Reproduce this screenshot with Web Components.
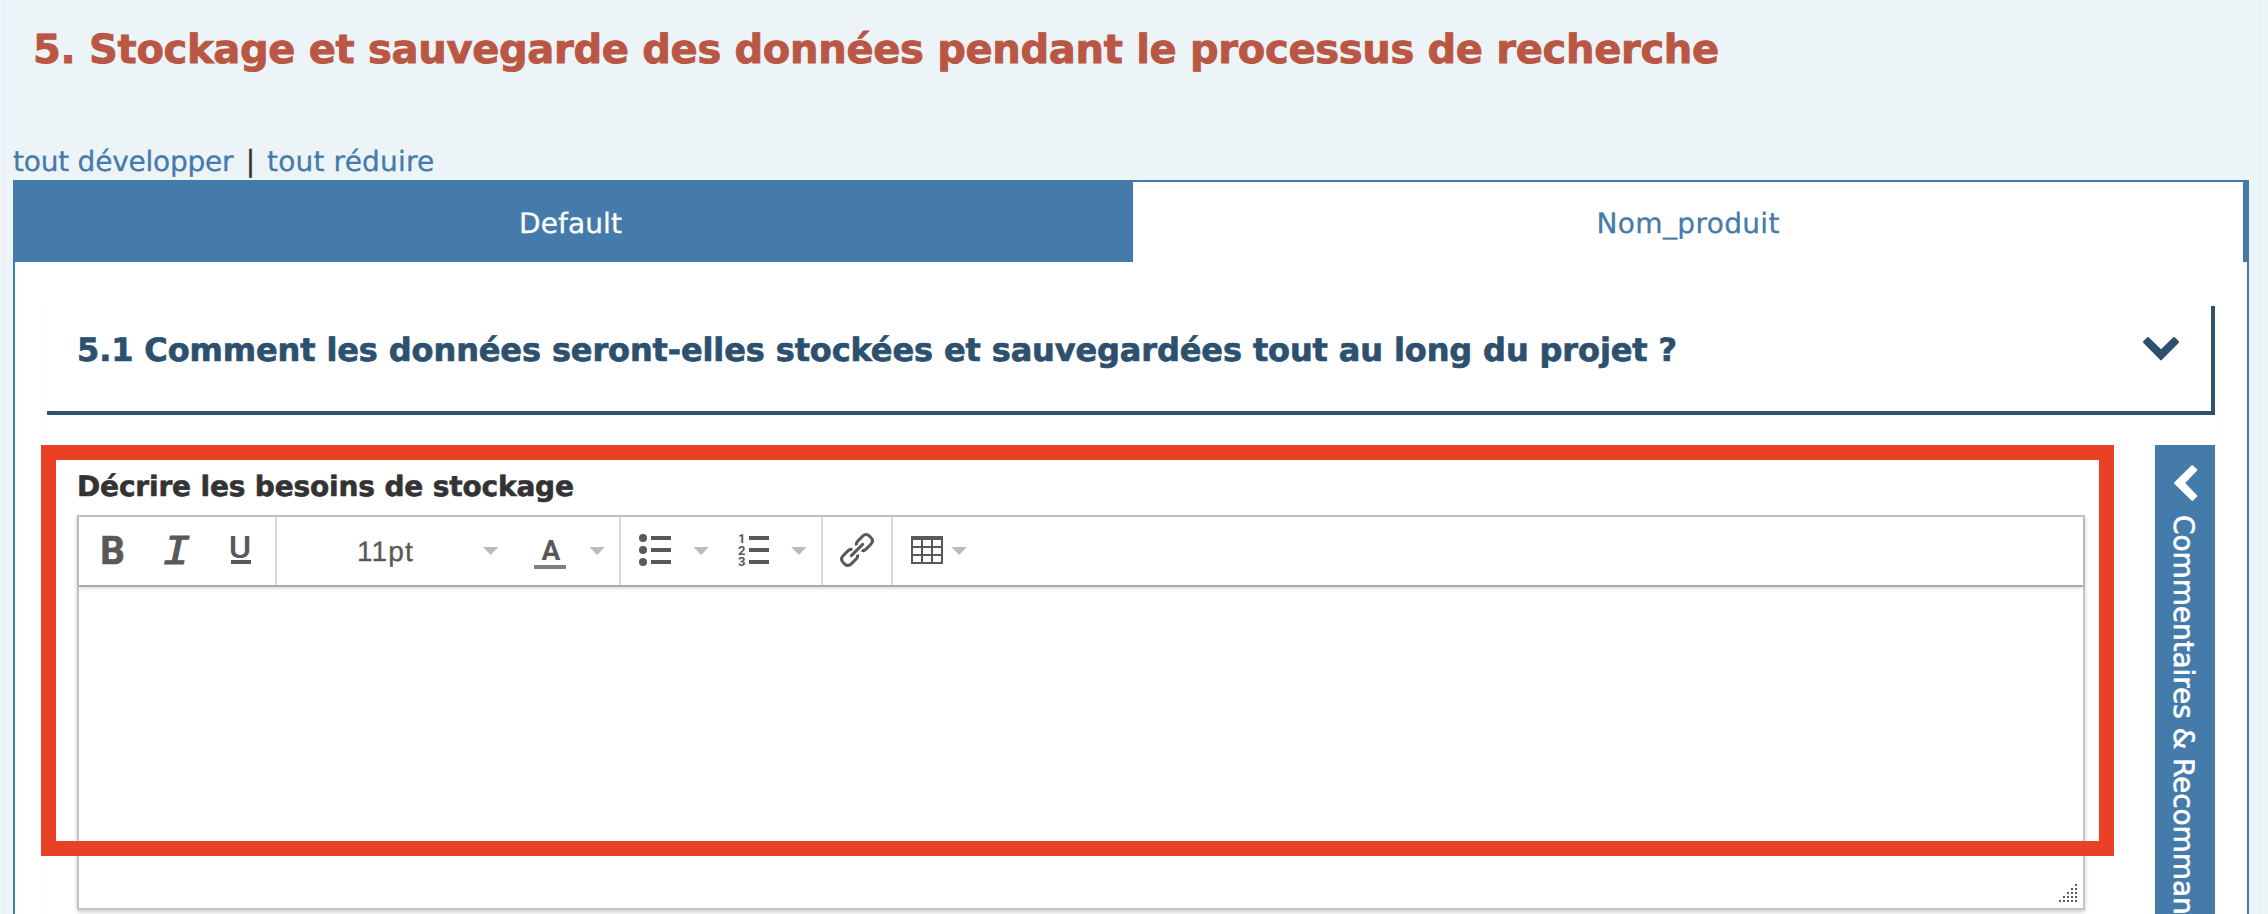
<!DOCTYPE html>
<html lang="fr">
<head>
<meta charset="utf-8">
<title>Plan de gestion de données</title>
<style>
  html, body { margin: 0; height: 914px; overflow: hidden; }
  body { background: #edf4f8; color: #333; font-family: "DejaVu Sans", Verdana, sans-serif; font-size: 28px; }
</style>
</head>
<body>
<plan-page></plan-page>
<script>
/* Text whose drawn extent is fixed by its "extent" attribute, through letter spacing. */
class FitText extends HTMLElement {
  connectedCallback() {
    const root = this.attachShadow({ mode: 'open' });
    root.innerHTML = `<style>
      :host { display: block; white-space: pre; text-rendering: geometricPrecision; flex: none; -webkit-text-stroke: .3px currentColor; }
      span { display: inline-block; }
    </style><span><slot></slot></span>`;
    const cs = getComputedStyle(this);
    const text = this.textContent;
    const ctx = document.createElement('canvas').getContext('2d');
    ctx.font = `${cs.fontWeight} ${cs.fontSize} ${cs.fontFamily}`;
    ctx.textRendering = 'geometricPrecision';
    const m = ctx.measureText(text);
    const extent = parseFloat(this.getAttribute('extent'));
    const gap = (extent - m.actualBoundingBoxLeft - m.actualBoundingBoxRight) / (text.length - 1);
    const span = root.querySelector('span');
    span.style.letterSpacing = gap + 'px';
    span.style.marginInlineStart = m.actualBoundingBoxLeft + 'px';
    this.style.inlineSize = extent + 'px';
  }
}

class SectionHeader extends HTMLElement {
  constructor() {
    super();
    this.attachShadow({ mode: 'open' }).innerHTML = `<style>
      :host { display: block; height: 180px; box-sizing: border-box; }
      h1 { margin: 0; padding-left: 36px; height: 143px; font: bold 40px/101px "DejaVu Sans", Verdana, sans-serif; color: #b95744; box-sizing: border-box; }
      fit-text { -webkit-text-stroke: .3px currentColor; }
      h1 fit-text { -webkit-text-stroke: .9px currentColor; }
      nav { display: flex; line-height: 37px; padding-left: 13px; color: #457baa; }
      .bar { color: #333; width: 33px; text-align: center; -webkit-text-stroke: .4px #333; }
    </style>
    <h1><fit-text extent="1682">5. Stockage et sauvegarde des données pendant le processus de recherche</fit-text></h1>
    <nav><fit-text extent="221">tout développer</fit-text><span class="bar">|</span><fit-text extent="166">tout réduire</fit-text></nav>`;
  }
}

class ProductTabs extends HTMLElement {
  constructor() {
    super();
    this.attachShadow({ mode: 'open' }).innerHTML = `<style>
      :host { display: flex; height: 82px; box-sizing: border-box; border-top: 2px solid #457baa; border-right: 6px solid #457baa; line-height: 83px; background: #fff; }
      div { display: flex; justify-content: center; }
      .on { width: 1120px; background: #457baa; color: #fff; padding-right: 3px; box-sizing: border-box; }
      .off { flex: 1; color: #457baa; padding-left: 2px; }
    </style>
    <div class="on"><fit-text extent="101">Default</fit-text></div>
    <div class="off"><fit-text extent="181">Nom_produit</fit-text></div>`;
  }
}

class QuestionCard extends HTMLElement {
  constructor() {
    super();
    this.attachShadow({ mode: 'open' }).innerHTML = `<style>
      :host { display: flex; justify-content: space-between; height: 109px; box-sizing: border-box; border-right: 4px solid #2c506e; border-bottom: 4px solid #2c506e; padding: 0 32px 0 32px; font: bold 32px/88px "DejaVu Sans", Verdana, sans-serif; color: #2c506e; }
      ::slotted(fit-text) { -webkit-text-stroke: .7px currentColor; }
      svg { width: 36px; height: 24px; margin-top: 31px; flex: none; }
    </style>
    <slot></slot>
    <svg viewBox="0 0 36 24"><path d="M5 0Q4.500-.3 4 .4L.4 4Q-.3 5 .4 6L17 22.800Q18 24 19 22.800L35.600 6Q36.300 5 35.600 4L32 .4Q31 -.4 30 .4L18 12.200L6 .4Q5.500 0 5 0Z" fill="#2c506e"/></svg>`;
  }
}

const CARET = x => `<path d="M${x} 547h15.400l-7.700 8z" fill="#b5bdc2"/>`;
const ICONS = {
  bold: `<text x="100.300" y="564" font-family="Roboto" font-weight="700" font-size="39.400" textLength="24.500" lengthAdjust="spacingAndGlyphs" stroke="#595959" stroke-width=".7">B</text>`,
  italic: `<text transform="translate(162.500 564) scale(1.080 1)" font-family="Liberation Mono" font-style="italic" font-size="42.500" stroke="#595959" stroke-width="1.200">I</text>`,
  underline: `<text transform="translate(228.800 558) scale(1.110 1.020)" font-family="Roboto" font-weight="500" font-size="31">U</text><path d="M231 560h20v4h-20z"/>`,
  size: CARET(483),
  color: `<text x="541.500" y="560" font-family="Roboto" font-weight="700" font-size="28">A</text><path d="M534 565h32v4h-32z" fill="#808080"/>` + CARET(589.4),
  bullets: `<circle cx="643" cy="538" r="4"/><circle cx="643" cy="550" r="4"/><circle cx="643" cy="562" r="4"/><path d="M651 536h20v4h-20zM651 548h20v4h-20zM651 560h20v4h-20z"/>` + CARET(693.4),
  numbers: `<g font-family="Roboto" font-weight="700" font-size="13"><text x="738" y="543">1</text><text x="738" y="554.500">2</text><text x="738" y="566">3</text></g><path d="M749 536h20v4h-20zM749 548h20v4h-20zM749 560h20v4h-20z"/>` + CARET(791.2),
  link: `<g transform="translate(857 550) rotate(-45)" fill="none" stroke="#595959" stroke-width="3">
      <path d="M3 -3.500Q4 -5.800 7 -5.800H13.500Q18.600 -5.800 18.600 -1V1Q18.600 5.800 13.500 5.800H7Q4 5.800 3 3.500"/>
      <path d="M-3 -3.500Q-4 -5.800 -7 -5.800H-13.500Q-18.600 -5.800 -18.600 -1V1Q-18.600 5.800 -13.500 5.800H-7Q-4 5.800 -3 3.500"/>
      <path d="M-8 0H8" stroke-linecap="round"/></g>`,
  table: `<path fill-rule="evenodd" d="M911 536h32v28h-32zM913 540v6h8v-6zM923 540v6h8v-6zM933 540v6h8v-6zM913 548v6h8v-6zM923 548v6h8v-6zM933 548v6h8v-6zM913 556v6h8v-6zM923 556v6h8v-6zM933 556v6h8v-6z"/>` + CARET(951.4)
};

/* "from" and "to" are the button's span on the toolbar's drawing grid. */
class ToolButton extends HTMLElement {
  connectedCallback() {
    const from = +this.getAttribute('from'), width = this.getAttribute('to') - from;
    this.attachShadow({ mode: 'open' }).innerHTML = `<style>
      :host { display: flex; height: 68px; flex: none; color: #595959; font: 28px/69px "Liberation Sans", Arial, sans-serif; }
      svg { display: block; fill: #595959; flex: none; }
    </style><slot></slot><svg width="${width}" height="68" viewBox="${from} 517 ${width} 68">${ICONS[this.getAttribute('icon')]}</svg>`;
  }
}

class ToolGroup extends HTMLElement {
  constructor() {
    super();
    this.attachShadow({ mode: 'open' }).innerHTML = `<style>
      :host { display: flex; border-right: 2px solid #d9d9d9; }
      :host([last]) { border-right: 0; }
    </style><slot></slot>`;
  }
}

class RichEditor extends HTMLElement {
  constructor() {
    super();
    const dots = [];
    for (let r = 0; r < 5; r++) for (let c = 4 - r; c < 5; c++) dots.push(`M${c * 4} ${r * 4}h2v2h-2z`);
    this.attachShadow({ mode: 'open' }).innerHTML = `<style>
      :host { display: flex; flex-direction: column; height: 395px; box-sizing: border-box; border: 2px solid #c5c5c5; background: #fff; box-shadow: 0 2px 4px rgba(0,0,0,.2); }
      .bar { display: flex; height: 68px; border-bottom: 2px solid #aaa; box-shadow: 0 1px 4px rgba(0,0,0,.18); }
      .area { flex: 1; display: flex; align-items: flex-end; justify-content: flex-end; padding: 0 6px 6px 0; }
      .size { padding-left: 82px; }
    </style>
    <div class="bar">
      <tool-group><tool-button icon="bold" from="79" to="143"></tool-button><tool-button icon="italic" from="143" to="211"></tool-button><tool-button icon="underline" from="211" to="275"></tool-button></tool-group>
      <tool-group><tool-button class="size" icon="size" from="413" to="515"><fit-text extent="54">11pt</fit-text></tool-button><tool-button icon="color" from="515" to="619"></tool-button></tool-group>
      <tool-group><tool-button icon="bullets" from="621" to="721"></tool-button><tool-button icon="numbers" from="721" to="821"></tool-button></tool-group>
      <tool-group><tool-button icon="link" from="823" to="891"></tool-button></tool-group>
      <tool-group last><tool-button icon="table" from="893" to="983"></tool-button></tool-group>
    </div>
    <div class="area"><svg width="18" height="18"><path d="${dots.join('')}" fill="#595959"/></svg></div>`;
  }
}

class AnswerField extends HTMLElement {
  constructor() {
    super();
    this.attachShadow({ mode: 'open' }).innerHTML = `<style>
      :host { display: block; position: relative; width: 2073px; box-sizing: border-box; padding: 15px 29px 0 36px; }
      .label { height: 55px; line-height: 53px; font-weight: bold; padding-left: 2px; color: #333; }
      ::slotted(fit-text) { -webkit-text-stroke: .6px currentColor; }
      .mark { position: absolute; left: 0; top: 0; width: 2073px; height: 411px; box-sizing: border-box; border: 15px solid #ea4025; }
    </style>
    <div class="label"><slot></slot></div>
    <rich-editor></rich-editor>
    <div class="mark"></div>`;
  }
}

class CommentsRail extends HTMLElement {
  constructor() {
    super();
    this.attachShadow({ mode: 'open' }).innerHTML = `<style>
      :host { display: block; width: 60px; height: 469px; background: #457baa; color: #fff; overflow: hidden; }
      svg { display: block; width: 24px; height: 36px; margin: 20px 0 15px 19px; }
      .v { writing-mode: vertical-rl; line-height: 57px; width: 57px; }
      fit-text { -webkit-text-stroke: .6px currentColor; }
    </style>
    <svg viewBox="0 0 24 36"><path d="M0 18Q0 17.500 .6 17L17.500 .5Q18.200 -.3 19 .5L23 4.200Q23.700 5 23 5.800L11.200 18L23 30.200Q23.700 31 23 31.800L19 35.500Q18.200 36.300 17.500 35.500L.6 19Q0 18.500 0 18Z" fill="#fff"/></svg>
    <div class="v"><fit-text extent="397">Commentaires &amp; Recomman</fit-text></div>`;
  }
}

class PlanPage extends HTMLElement {
  constructor() {
    super();
    this.attachShadow({ mode: 'open' }).innerHTML = `<style>
      :host { display: block; height: 914px; margin: 0 7px 0 3px; border-left: 1px solid #e7eff4; border-right: 1px solid #e7eff4; box-sizing: border-box; overflow: hidden; }
      section-header { margin-left: -4px; }
      main { margin: 0 11px 0 9px; }
      .panel { height: 652px; box-sizing: border-box; border: solid #457baa; border-width: 0 2px; background: #fff; padding: 44px 29px 0; }
      .inner { border: solid #fbfbfb; border-width: 0 1px; height: 608px; padding: 0 2px; }
      question-card { margin-bottom: 30px; }
      .row { display: flex; justify-content: space-between; margin-left: -6px; }
    </style>
    <section-header></section-header>
    <main>
      <product-tabs></product-tabs>
      <div class="panel"><div class="inner">
        <question-card><fit-text extent="1596.500">5.1 Comment les données seront-elles stockées et sauvegardées tout au long du projet ?</fit-text></question-card>
        <div class="row"><answer-field><fit-text extent="494">Décrire les besoins de stockage</fit-text></answer-field><comments-rail></comments-rail></div>
      </div></div>
    </main>`;
  }
}

customElements.define('fit-text', FitText);
customElements.define('section-header', SectionHeader);
customElements.define('product-tabs', ProductTabs);
customElements.define('question-card', QuestionCard);
customElements.define('tool-button', ToolButton);
customElements.define('tool-group', ToolGroup);
customElements.define('rich-editor', RichEditor);
customElements.define('answer-field', AnswerField);
customElements.define('comments-rail', CommentsRail);
customElements.define('plan-page', PlanPage);
</script>
</body>
</html>
